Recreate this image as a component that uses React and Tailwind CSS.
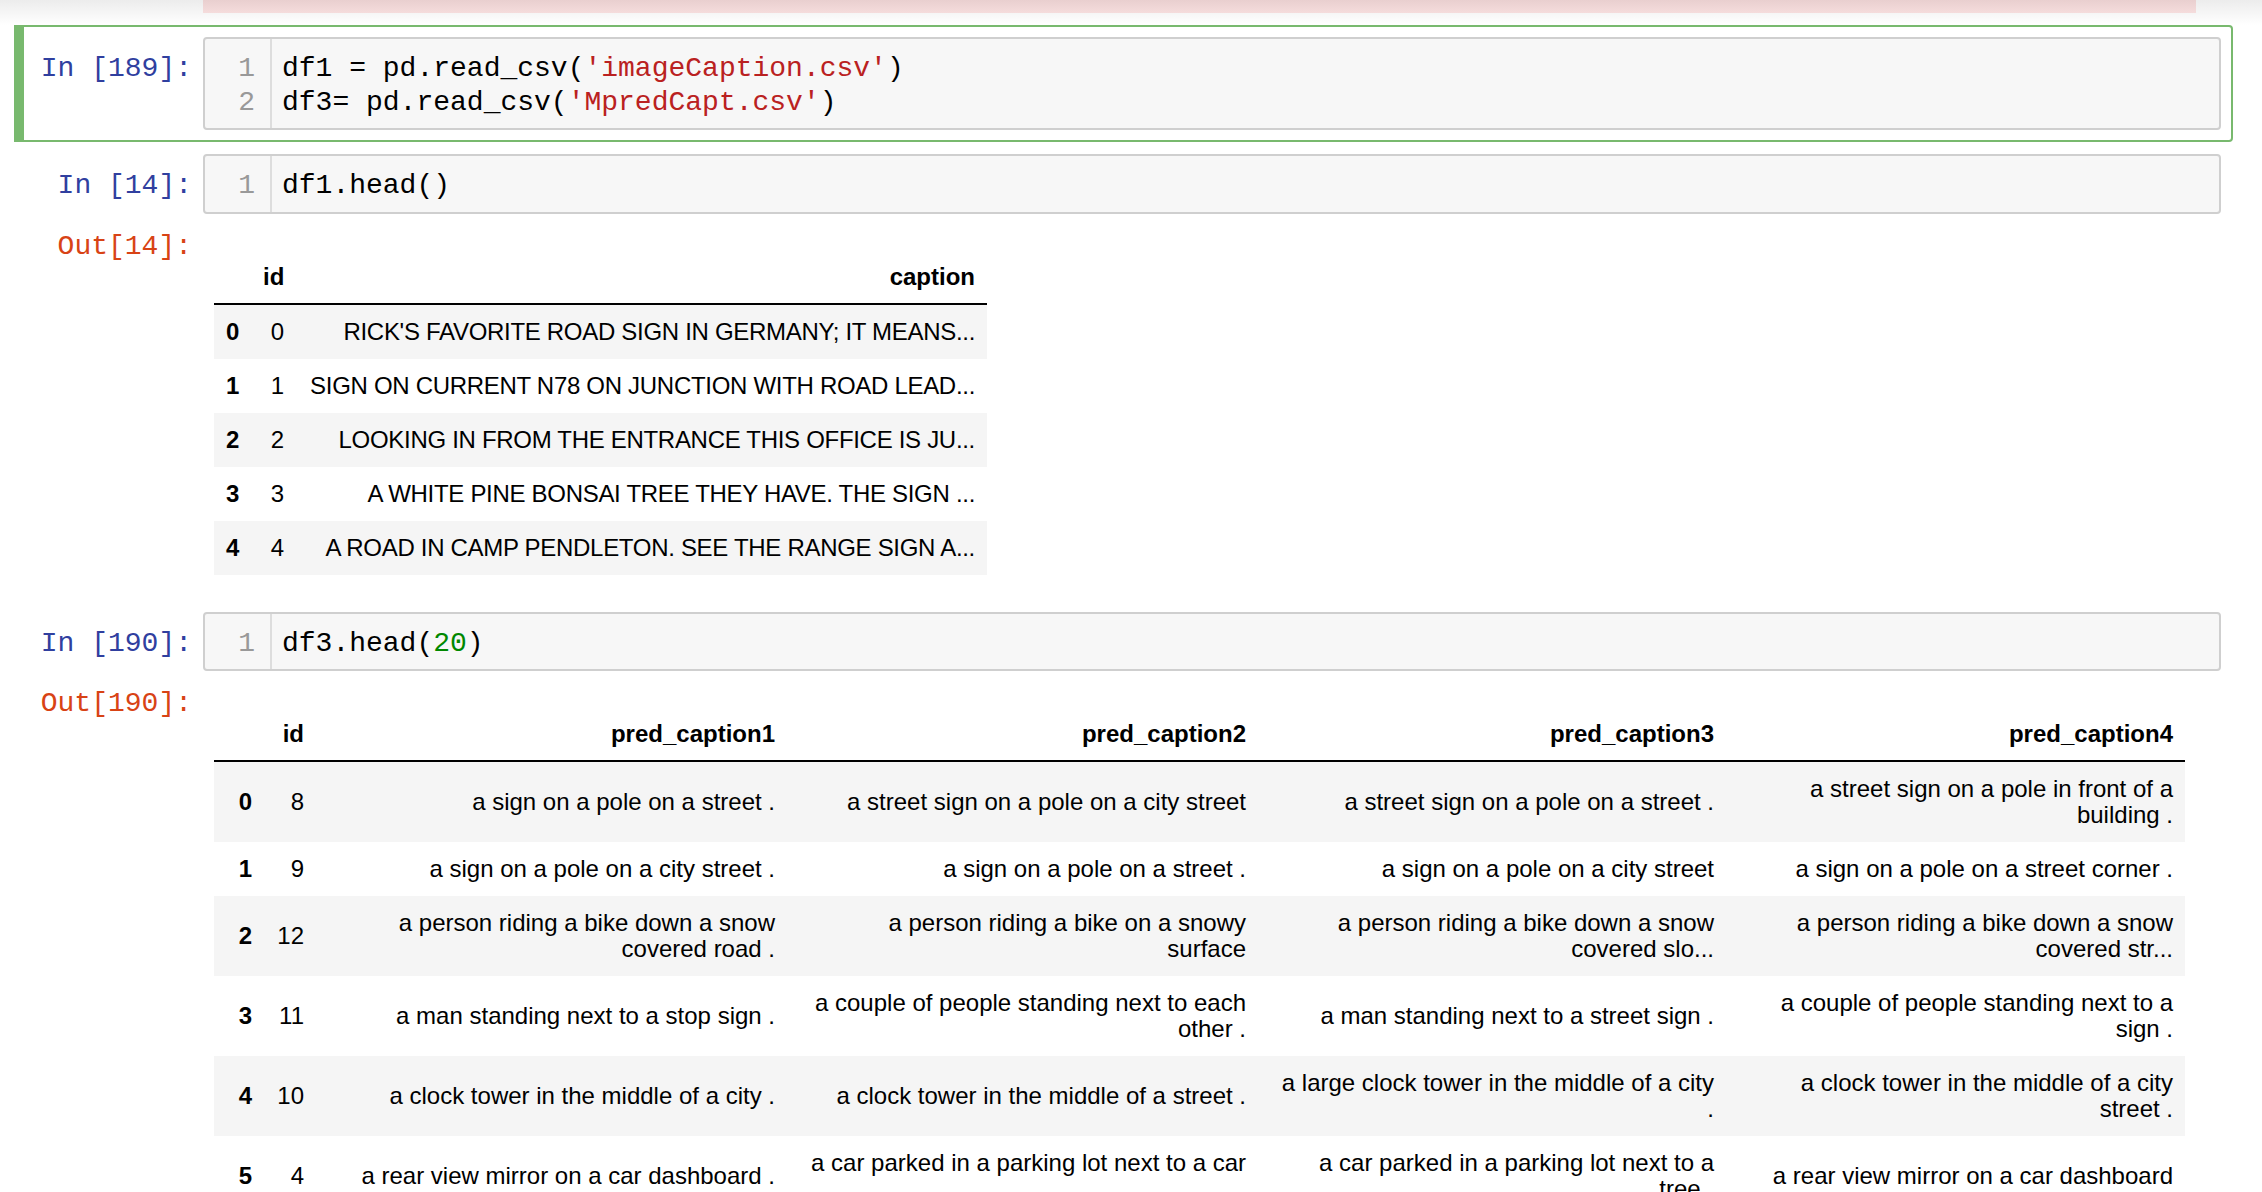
import React from "react";

const mono = "font-['Liberation_Mono','DejaVu_Sans_Mono',monospace]";
const sans = "font-['Liberation_Sans',Arial,sans-serif]";

const captions = [
  ["0", "0", "RICK'S FAVORITE ROAD SIGN IN GERMANY; IT MEANS..."],
  ["1", "1", "SIGN ON CURRENT N78 ON JUNCTION WITH ROAD LEAD..."],
  ["2", "2", "LOOKING IN FROM THE ENTRANCE THIS OFFICE IS JU..."],
  ["3", "3", "A WHITE PINE BONSAI TREE THEY HAVE. THE SIGN ..."],
  ["4", "4", "A ROAD IN CAMP PENDLETON. SEE THE RANGE SIGN A..."],
];

const preds = [
  ["0", "8", "a sign on a pole on a street .", "a street sign on a pole on a city street", "a street sign on a pole on a street .", "a street sign on a pole in front of a\nbuilding ."],
  ["1", "9", "a sign on a pole on a city street .", "a sign on a pole on a street .", "a sign on a pole on a city street", "a sign on a pole on a street corner ."],
  ["2", "12", "a person riding a bike down a snow\ncovered road .", "a person riding a bike on a snowy\nsurface", "a person riding a bike down a snow\ncovered slo...", "a person riding a bike down a snow\ncovered str..."],
  ["3", "11", "a man standing next to a stop sign .", "a couple of people standing next to each\nother .", "a man standing next to a street sign .", "a couple of people standing next to a\nsign ."],
  ["4", "10", "a clock tower in the middle of a city .", "a clock tower in the middle of a street .", "a large clock tower in the middle of a city\n.", "a clock tower in the middle of a city\nstreet ."],
  ["5", "4", "a rear view mirror on a car dashboard .", "a car parked in a parking lot next to a car\n.", "a car parked in a parking lot next to a\ntree .", "a rear view mirror on a car dashboard"],
];

function Cell({ selected, children }) {
  return (
    <div
      className={
        selected
          ? "border-2 border-l-[10px] border-[#78b96e] rounded-r-[4px] pl-[2px] pr-[10px] py-[10px]"
          : "border-2 border-l-[10px] border-transparent pl-[2px] pr-[10px] py-[10px]"
      }
    >
      {children}
    </div>
  );
}

function Input({ n, lines }) {
  return (
    <div className="flex">
      <div className={`w-[177px] shrink-0 pr-[11px] pt-[15px] text-right text-[28px] leading-[34px] text-[#303F9F] whitespace-pre ${mono}`}>
        {`In [${n}]:`}
      </div>
      <div className={`flex-1 flex border-2 border-[#cfcfcf] rounded-[4px] bg-[#f7f7f7] text-[28px] leading-[34px] ${mono}`}>
        <div className="w-[67px] shrink-0 border-r-2 border-[#dddddd] pt-[13px] pb-[9px] pr-[15px] text-right text-[#999999]">
          {lines.map((_, i) => (
            <div key={i} className="h-[33.5px]">{i + 1}</div>
          ))}
        </div>
        <div className="pl-[10px] pt-[13px] pb-[9px] text-black whitespace-pre">
          {lines.map((l, i) => (
            <div key={i} className="h-[33.5px]">{l}</div>
          ))}
        </div>
      </div>
    </div>
  );
}

function Output({ n, children }) {
  return (
    <div className="flex">
      <div className={`w-[177px] shrink-0 pr-[11px] pt-[16px] text-right text-[28px] leading-[34px] text-[#D84315] ${mono}`}>
        {`Out[${n}]:`}
      </div>
      <div className="flex-1 pl-[11px] pt-[37px] pb-[13px]">{children}</div>
    </div>
  );
}

const th = "px-[12px] py-[13px] text-right align-bottom font-bold border-b-2 border-black";
const td = "px-[12px] py-[14px] text-right align-middle whitespace-pre";

export default function App() {
  return (
    <div className={`w-[2262px] h-[1192px] overflow-hidden bg-white text-black ${sans}`}>
      {/* previous output edge */}
      <div className="h-[25px] bg-linear-to-b from-[#ececec] to-white">
        <div className="ml-[203px] w-[1993px] h-[13px] bg-linear-to-b from-[#e9cfcf] to-[#f5dcdc]" />
      </div>

      <div className="ml-[14px] w-[2219px]">
        <Cell selected>
          <Input
            n="189"
            lines={[
              <>df1 = pd.read_csv(<span className="text-[#BA2121]">'imageCaption.csv'</span>)</>,
              <>df3= pd.read_csv(<span className="text-[#BA2121]">'MpredCapt.csv'</span>)</>,
            ]}
          />
        </Cell>

        <Cell>
          <Input n="14" lines={["df1.head()"]} />
          <Output n="14">
            <table className="table-fixed border-collapse w-[773px] text-[24px] leading-[26px]">
              <colgroup>
                <col className="w-[37px]" />
                <col className="w-[45px]" />
                <col />
              </colgroup>
              <thead>
                <tr>
                  <th className={th}></th>
                  <th className={th}>id</th>
                  <th className={th}>caption</th>
                </tr>
              </thead>
              <tbody>
                {captions.map((r, i) => (
                  <tr key={i} className={i % 2 === 0 ? "bg-[#f5f5f5]" : "bg-white"}>
                    <th className={`${td} font-bold`}>{r[0]}</th>
                    <td className={td}>{r[1]}</td>
                    <td className={`${td} tracking-[-0.3px]`}>{r[2]}</td>
                  </tr>
                ))}
              </tbody>
            </table>
          </Output>
        </Cell>

        <Cell>
          <Input n="190" lines={[<>df3.head(<span className="text-[#008800]">20</span>)</>]} />
          <Output n="190">
            <table className="table-fixed border-collapse w-[1971px] text-[24px] leading-[26px]">
              <colgroup>
                <col className="w-[50px]" />
                <col className="w-[52px]" />
                <col className="w-[471px]" />
                <col className="w-[471px]" />
                <col className="w-[468px]" />
                <col className="w-[459px]" />
              </colgroup>
              <thead>
                <tr>
                  <th className={th}></th>
                  <th className={th}>id</th>
                  <th className={th}>pred_caption1</th>
                  <th className={th}>pred_caption2</th>
                  <th className={th}>pred_caption3</th>
                  <th className={th}>pred_caption4</th>
                </tr>
              </thead>
              <tbody>
                {preds.map((r, i) => (
                  <tr key={i} className={i % 2 === 0 ? "bg-[#f5f5f5]" : "bg-white"}>
                    <th className={`${td} font-bold`}>{r[0]}</th>
                    {r.slice(1).map((c, j) => (
                      <td key={j} className={td}>{c}</td>
                    ))}
                  </tr>
                ))}
              </tbody>
            </table>
          </Output>
        </Cell>
      </div>
    </div>
  );
}
